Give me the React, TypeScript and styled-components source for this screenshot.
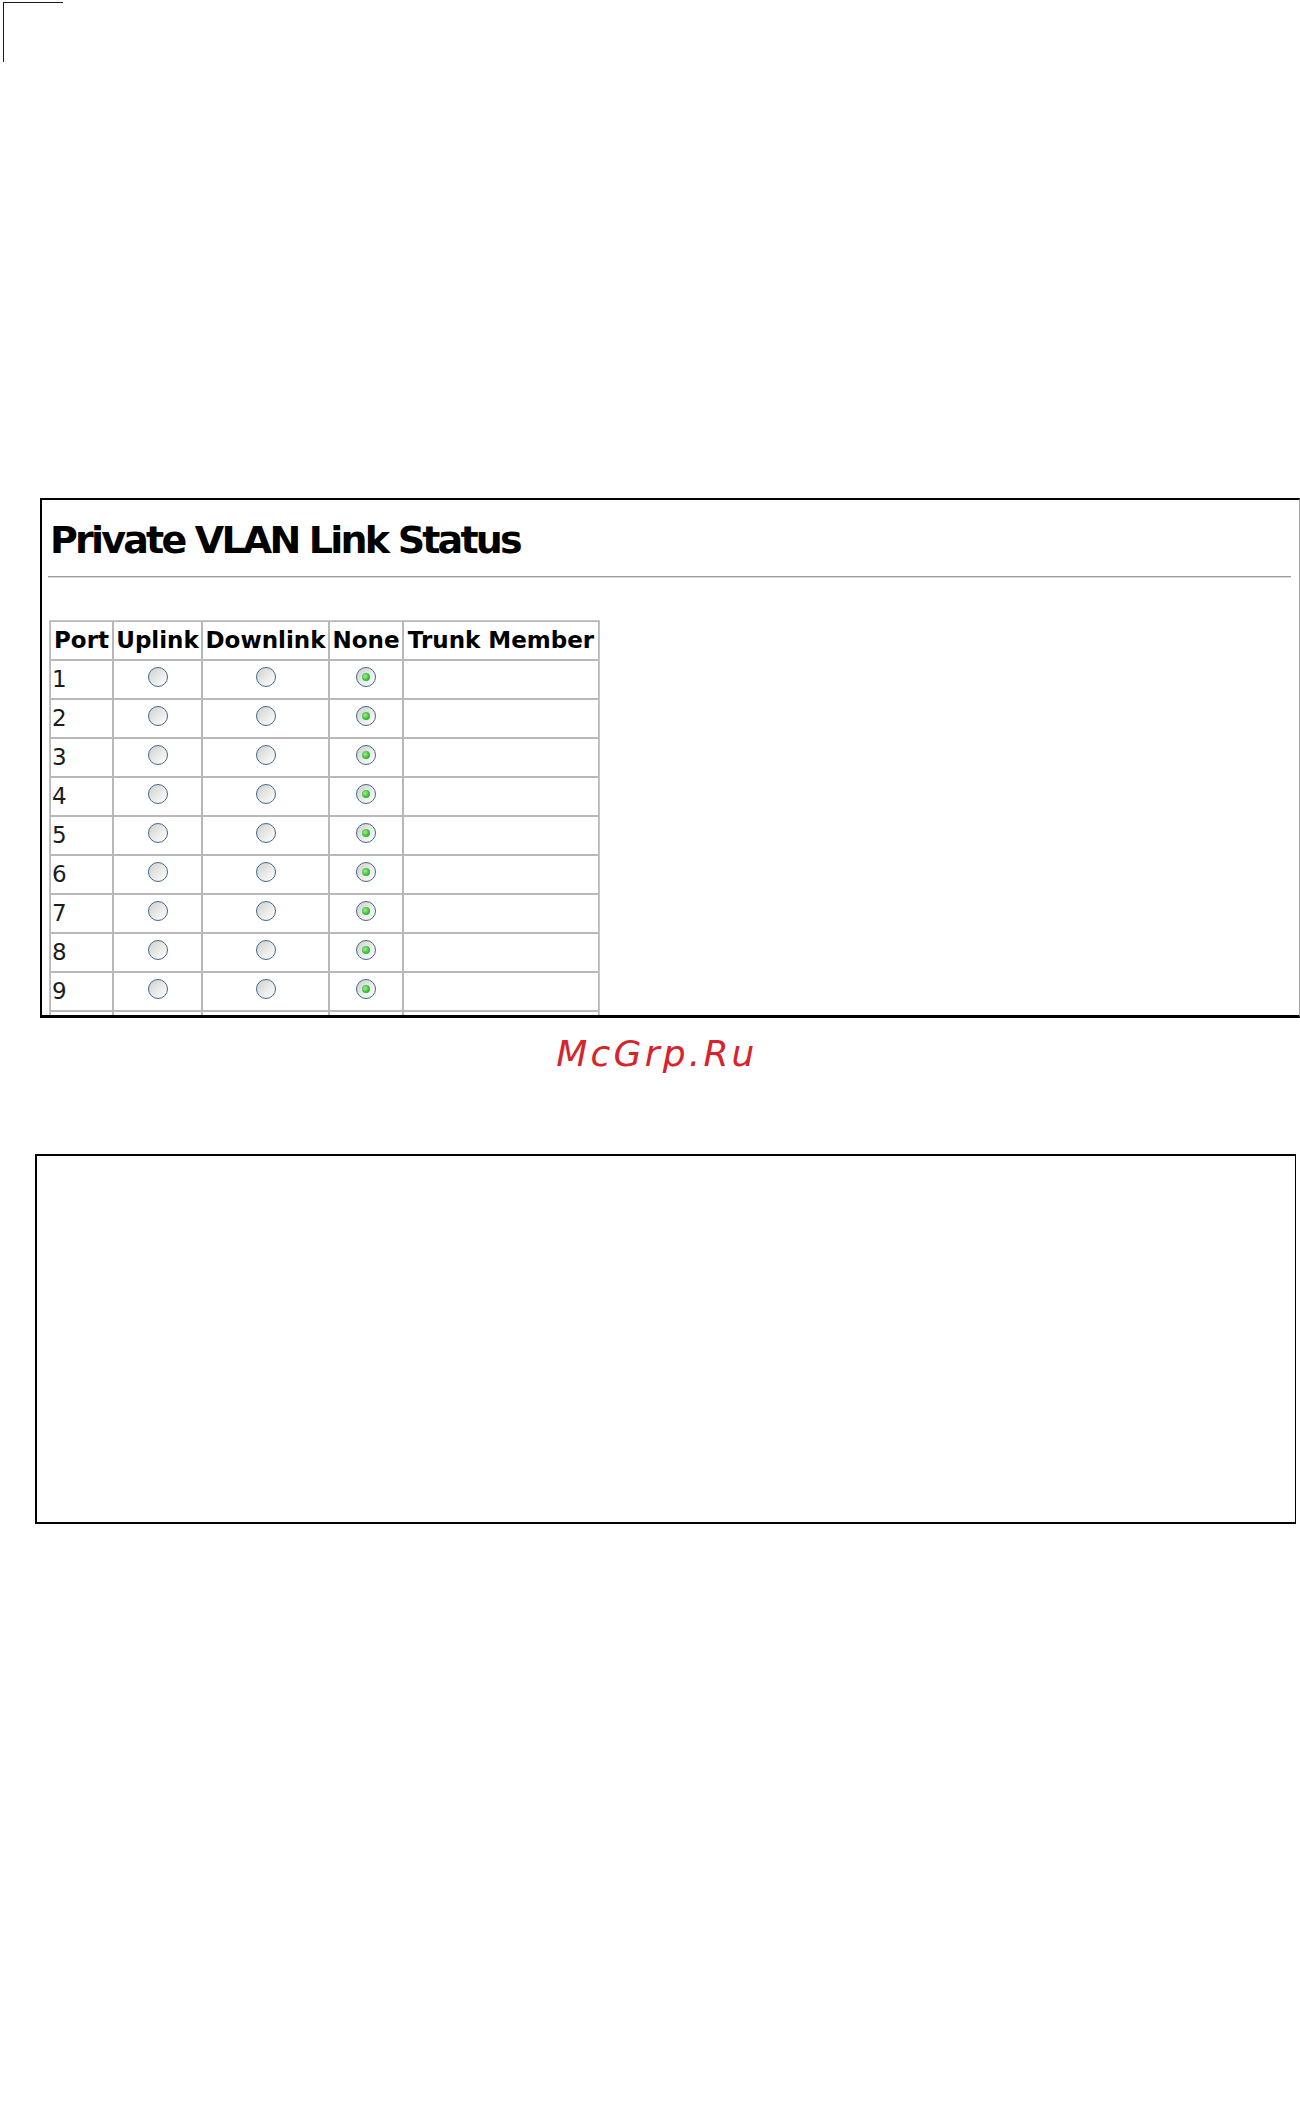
import styled, { createGlobalStyle } from "styled-components";

const GlobalStyle = createGlobalStyle`
  html, body {
    margin: 0;
    padding: 0;
    background: #fff;
  }
  body {
    font-family: "DejaVu Sans", Verdana, sans-serif;
    color: #000;
  }
`;

const Page = styled.div`
  width: 1300px;
  min-height: 2107px;
  padding-top: 2px;
  box-sizing: border-box;
`;

// crop mark in the top-left corner of the scanned page
const CropMark = styled.div`
  margin-left: 3px;
  width: 60px;
  height: 60px;
  border-top: 1px solid #1a1a1a;
  border-left: 1px solid #1a1a1a;
  box-sizing: border-box;
`;

// Browser frame holding the screenshot
const Frame = styled.section`
  margin: 436px 0 0 40px;
  width: 1260px;
  height: 520px;
  box-sizing: border-box;
  border-top: 2px solid #000;
  border-left: 2px solid #000;
  border-bottom: 3px solid #000;
  border-right: 1px solid #a4a4a4;
  padding: 18px 8px 0 7px;
  overflow: hidden;
`;

const Title = styled.h1`
  margin: 0;
  font-family: "DejaVu Sans", Verdana, sans-serif;
  font-weight: bold;
  font-size: 38px;
  line-height: 44px;
  letter-spacing: -2.8px;
  padding-left: 1px;
`;

const Rule = styled.hr`
  margin: 14px 0 0 -1px;
  height: 0;
  border: none;
  border-top: 1px solid #9c9c9c;
  border-bottom: 1px solid #dadada;
`;

const StatusTable = styled.table`
  margin-top: 42px;
  border-collapse: separate;
  border-spacing: 0;
  border: 1px solid #c6c6c6;
  table-layout: fixed;
  width: 550px;
  font-family: "DejaVu Sans", Verdana, sans-serif;
  font-size: 23px;
  line-height: 37px;
`;

const Row = styled.tr`
  height: 39px;
`;

const HeadCell = styled.th<{ $w: number }>`
  width: ${(p) => p.$w}px;
  box-sizing: border-box;
  border: 1px solid #b8b8b8;
  padding: 0 2px;
  font-weight: bold;
  text-align: center;
  white-space: nowrap;
  color: #000;
`;

const Cell = styled.td<{ $center?: boolean }>`
  box-sizing: border-box;
  height: 39px;
  border: 1px solid #b8b8b8;
  padding: 0 1px;
  text-align: ${(p) => (p.$center ? "center" : "left")};
  color: #1c1c1c;
  white-space: nowrap;
`;

const Radio = styled.span<{ $checked?: boolean }>`
  display: inline-block;
  vertical-align: baseline;
  width: 20px;
  height: 20px;
  box-sizing: border-box;
  border-radius: 50%;
  border: 1.6px solid #3f6890;
  background: linear-gradient(135deg, #cfcfcb 0%, #ebebe8 55%, #ffffff 100%);
  position: relative;

  ${(p) =>
    p.$checked &&
    `
    &::after {
      content: "";
      position: absolute;
      left: 50%;
      top: 50%;
      width: 8px;
      height: 8px;
      margin: -4px 0 0 -4px;
      border-radius: 50%;
      background: radial-gradient(circle at 40% 40%, #a6ec98 0%, #3cbf3a 55%, #1f9a22 100%);
    }
  `}
`;

const Watermark = styled.div`
  margin-top: 14px;
  text-align: center;
  font-family: "DejaVu Sans", Verdana, sans-serif;
  font-style: italic;
  font-size: 36px;
  line-height: 44px;
  letter-spacing: 3.2px;
  color: #d8232a;
  padding-left: 14px;
`;

const EmptyFigure = styled.div`
  margin: 78px 0 0 35px;
  width: 1261px;
  height: 370px;
  box-sizing: border-box;
  border-top: 2px solid #000;
  border-left: 2px solid #000;
  border-bottom: 2px solid #000;
  border-right: 1px solid #000;
`;

const columns = [
  { label: "Port", width: 63 },
  { label: "Uplink", width: 89 },
  { label: "Downlink", width: 127 },
  { label: "None", width: 74 },
  { label: "Trunk Member", width: 196 },
];

// nine full rows are visible; a tenth row peeks out at the frame's bottom edge
const ports = Array.from({ length: 9 }, (_, i) => i + 1);

const App = () => {
  return (
    <>
      <GlobalStyle />
      <Page>
        <CropMark />
        <Frame>
          <Title>Private VLAN Link Status</Title>
          <Rule />
          <StatusTable>
            <thead>
              <Row>
                {columns.map((c) => (
                  <HeadCell key={c.label} $w={c.width}>
                    {c.label}
                  </HeadCell>
                ))}
              </Row>
            </thead>
            <tbody>
              {ports.map((port) => (
                <Row key={port}>
                  <Cell>{port}</Cell>
                  <Cell $center>
                    <Radio />
                  </Cell>
                  <Cell $center>
                    <Radio />
                  </Cell>
                  <Cell $center>
                    <Radio $checked />
                  </Cell>
                  <Cell />
                </Row>
              ))}
              <Row>
                <Cell />
                <Cell />
                <Cell />
                <Cell />
                <Cell />
              </Row>
            </tbody>
          </StatusTable>
        </Frame>
        <Watermark>McGrp.Ru</Watermark>
        <EmptyFigure />
      </Page>
    </>
  );
};

export default App;
